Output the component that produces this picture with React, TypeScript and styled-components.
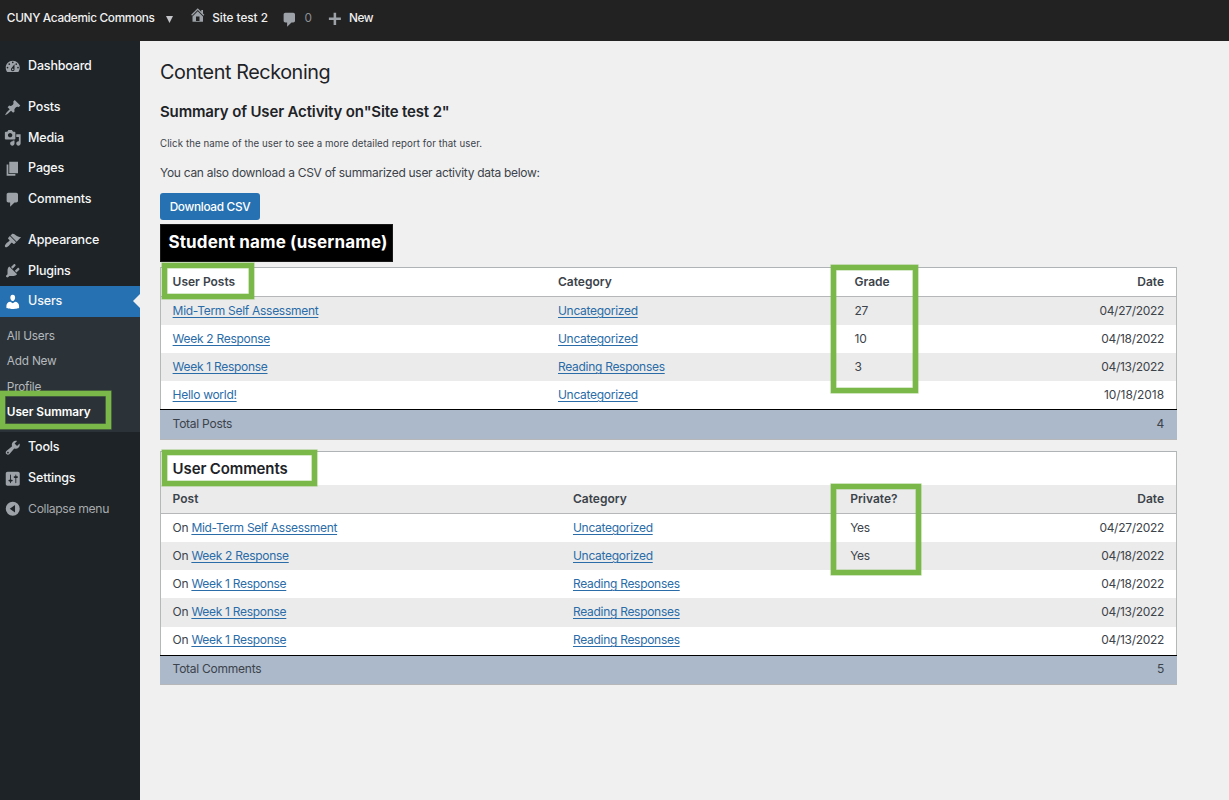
import React from "react";
import styled, { createGlobalStyle } from "styled-components";

const GlobalStyle = createGlobalStyle`
  *, *::before, *::after { box-sizing: border-box; }
  body {
    margin: 0;
    background: #f0f0f0;
    color: #3c434a;
    font-family: Inter, "Liberation Sans", sans-serif;
    font-size: 12px;
    letter-spacing: -0.29px;
  }
`;

const Page = styled.div`
  position: relative;
  height: 800px;
  overflow: hidden;
  display: flex;
  flex-direction: column;
`;

const Label = styled.span<{ $ls?: number }>`
  white-space: nowrap;
  letter-spacing: ${(p) => (p.$ls === undefined ? "inherit" : `${p.$ls}px`)};
`;

/* ---------- top bar ---------- */

const TopBar = styled.header`
  flex: none;
  height: 41px;
  background: #222222;
  color: #f0f0f1;
  display: flex;
  align-items: center;
  padding: 0 0 6px 6.8px;
  font-weight: 500;
  font-size: 11.8px;
  letter-spacing: 0;
`;

const SiteSwitch = styled.div`
  display: flex;
  align-items: center;
  width: 182.2px;
`;

const Caret = styled.svg`
  width: 7px;
  height: 7px;
  margin: 4px 0 0 11px;
  fill: #c3c4c7;
`;

const BarEntry = styled.div<{ $w: number; $muted?: boolean }>`
  display: flex;
  align-items: center;
  width: ${(p) => p.$w}px;
  color: ${(p) => (p.$muted ? "#8c8f94" : "#f0f0f1")};
  font-weight: ${(p) => (p.$muted ? 400 : 500)};
`;

const BarIcon = styled.svg<{ $gap: number; $dy?: number }>`
  flex: none;
  width: 17.5px;
  height: 17.5px;
  margin-right: ${(p) => p.$gap}px;
  margin-top: ${(p) => p.$dy ?? 0}px;
  fill: #9ca2a7;
`;

/* ---------- sidebar ---------- */

const Body = styled.div`
  flex: 1;
  display: flex;
`;

const Sidebar = styled.nav`
  flex: none;
  width: 140px;
  background: #1d2327;
  padding-top: 9.7px;
`;

const MenuItem = styled.div<{ $active?: boolean; $muted?: boolean; $gap?: boolean }>`
  position: relative;
  height: 30.7px;
  margin-top: ${(p) => (p.$gap ? 10.2 : 0)}px;
  padding: 0 0 0.8px 3.6px;
  display: flex;
  align-items: center;
  background: ${(p) => (p.$active ? "#2671b1" : "transparent")};
  color: ${(p) => (p.$muted ? "#a7aaad" : "#f6f7f7")};
  font-size: ${(p) => (p.$muted ? 12.2 : 12.5)}px;
  font-weight: ${(p) => (p.$muted ? 400 : 500)};
  letter-spacing: ${(p) => (p.$muted ? -0.36 : -0.18)}px;
`;

const MenuIcon = styled.svg<{ $white?: boolean }>`
  flex: none;
  width: 17.5px;
  height: 17.5px;
  margin-top: 1.8px;
  margin-right: 7px;
  fill: ${(p) => (p.$white ? "#ffffff" : "#9ca2a7")};
`;

const Notch = styled.i`
  position: absolute;
  right: 0;
  top: 8px;
  border: 7px solid transparent;
  border-left: 0;
  border-right-color: #f0f0f0;
`;

const SubMenu = styled.div`
  background: #2c3338;
  height: 115.3px;
  padding: 7.4px 0 0 6.8px;
`;

const SubItem = styled.div<{ $current?: boolean }>`
  height: 25.3px;
  line-height: 25.3px;
  font-size: 11.8px;
  letter-spacing: ${(p) => (p.$current ? -0.05 : -0.2)}px;
  color: ${(p) => (p.$current ? "#ffffff" : "#b4b9be")};
  font-weight: ${(p) => (p.$current ? 600 : 400)};
`;

/* ---------- content ---------- */

const Main = styled.main`
  flex: 1;
  display: flex;
  flex-direction: column;
  align-items: flex-start;
  padding: 18px 52px 0 20px;
`;

const Title = styled.h1`
  margin: 0;
  font-size: 19.8px;
  line-height: 26px;
  font-weight: 400;
  letter-spacing: -0.42px;
  color: #1d2327;
`;

const Heading = styled.h2`
  margin: 17px 0 0;
  font-size: 15px;
  line-height: 20px;
  font-weight: 600;
  letter-spacing: -0.15px;
  color: #1d2327;
`;

const Small = styled.p`
  margin: 14px 0 0;
  font-size: 9.7px;
  line-height: 16px;
  letter-spacing: 0.09px;
`;

const Para = styled.p`
  margin: 11px 0 0;
  line-height: 20px;
`;

const Button = styled.button`
  margin: 10px 0 0;
  width: 100px;
  height: 27px;
  padding: 0;
  border: 0;
  border-radius: 3px;
  background: #2671b1;
  color: #ffffff;
  font: 500 11.8px Inter, sans-serif;
  letter-spacing: -0.3px;
`;

const StudentName = styled.div`
  margin-top: 4px;
  width: 233px;
  height: 38px;
  line-height: 35px;
  padding-left: 7.4px;
  background: #000000;
  border: 1px solid #1a1a1a;
  color: #ffffff;
  font-size: 17px;
  font-weight: 700;
  letter-spacing: 0.15px;
`;

const Table = styled.section<{ $top: number }>`
  align-self: stretch;
  margin-top: ${(p) => p.$top}px;
  border: 1px solid #b5b7b9;
  border-top-color: #b0b3b5;
  background: #ffffff;
`;

const TableTitle = styled.h2`
  margin: 0;
  height: 33px;
  line-height: 33px;
  padding-left: 11.6px;
  font-size: 15px;
  font-weight: 600;
  letter-spacing: -0.12px;
  color: #1d2327;
`;

const Row = styled.div<{ $cols: string; $shade?: boolean; $h?: number; $lift?: number }>`
  display: grid;
  grid-template-columns: ${(p) => p.$cols};
  align-items: center;
  height: ${(p) => p.$h ?? 28}px;
  padding: 0 12px ${(p) => p.$lift ?? 1}px 11.6px;
  background: ${(p) => (p.$shade ? "#ebebeb" : "#ffffff")};
`;

const HeadRow = styled(Row)`
  border-bottom: 1px solid #b5b7b9;
  font-weight: 600;
  letter-spacing: 0;
`;

const FootRow = styled.div<{ $h: number }>`
  display: flex;
  justify-content: space-between;
  height: ${(p) => p.$h}px;
  margin: 0 -1px;
  padding: 0 13px 0 12.6px;
  line-height: ${(p) => p.$h * 2 - 32}px;
  letter-spacing: -0.25px;
  border-top: 1px solid #000000;
  background: #abb9cb;
`;

const Link = styled.a`
  color: #2a6ca8;
  text-decoration: underline;
  text-decoration-thickness: 1px;
  text-underline-offset: 2px;
`;

/* Marker rectangles drawn over the page */
const Marker = styled.div<{ $x: number; $y: number; $w: number; $h: number }>`
  position: absolute;
  left: ${(p) => p.$x}px;
  top: ${(p) => p.$y}px;
  width: ${(p) => p.$w}px;
  height: ${(p) => p.$h}px;
  border: 5px solid #7ab949;
  box-shadow: 0 0 0 0.6px #7ab94999, inset 0 0 0 0.6px #7ab94999;
`;

const ICONS = {
  dashboard:
    "M3.76 16h12.48c1.1-1.37 1.76-3.11 1.76-5 0-4.42-3.58-8-8-8s-8 3.58-8 8c0 1.89.66 3.63 1.76 5zM10 4c.55 0 1 .45 1 1s-.45 1-1 1-1-.45-1-1 .45-1 1-1zM6 6c.55 0 1 .45 1 1s-.45 1-1 1-1-.45-1-1 .45-1 1-1zm8 0c.55 0 1 .45 1 1s-.45 1-1 1-1-.45-1-1 .45-1 1-1zm-5.37 5.55L12 7v6c0 1.1-.9 2-2 2s-2-.9-2-2c0-.57.24-1.08.63-1.45zM4 10c.55 0 1 .45 1 1s-.45 1-1 1-1-.45-1-1 .45-1 1-1zm12 0c.55 0 1 .45 1 1s-.45 1-1 1-1-.45-1-1 .45-1 1-1zm-5 3c0-.55-.45-1-1-1s-1 .45-1 1 .45 1 1 1 1-.45 1-1z",
  posts:
    "M10.44 3.02l1.82-1.82 6.36 6.35-1.83 1.82c-1.05-.68-2.48-.57-3.41.36l-.75.75c-.92.93-1.04 2.35-.35 3.41l-1.83 1.82-2.41-2.41-2.8 2.79c-.42.42-3.38 2.71-3.8 2.29s1.86-3.39 2.28-3.81l2.79-2.79L4.1 9.36l1.83-1.82c1.05.69 2.48.57 3.4-.36l.75-.75c.93-.92 1.05-2.35.36-3.41z",
  media:
    "M13 11V4c0-.55-.45-1-1-1h-1.67L9 1H5L3.67 3H2c-.55 0-1 .45-1 1v7c0 .55.45 1 1 1h10c.55 0 1-.45 1-1zM7 4.5c1.38 0 2.5 1.12 2.5 2.5S8.38 9.5 7 9.5 4.5 8.38 4.5 7 5.62 4.5 7 4.5zM14 6h5v10.5c0 1.38-1.12 2.5-2.5 2.5S14 17.88 14 16.5s1.12-2.5 2.5-2.5c.17 0 .34.02.5.05V9h-3V6zm-4 8.05V13h2v3.5c0 1.38-1.12 2.5-2.5 2.5S7 17.88 7 16.5 8.12 14 9.5 14c.17 0 .34.02.5.05z",
  pages: "M6 15V2h10v13H6zm-1 1h8v2H3V5h2v11z",
  comments: "M5 2h9c1.1 0 2 .9 2 2v7c0 1.1-.9 2-2 2h-2l-5 5v-5H5c-1.1 0-2-.9-2-2V4c0-1.1.9-2 2-2z",
  appearance:
    "M14.48 11.06L7.41 3.99l1.5-1.5c.5-.56 2.3-.47 3.51.32 1.21.8 1.43 1.28 2.91 2.1 1.18.64 2.45 1.26 4.45.85zm-.71.71L6.7 4.7 4.93 6.47c-.39.39-.39 1.02 0 1.41l1.06 1.06c.39.39.39 1.03 0 1.42-.6.6-1.43 1.11-2.21 1.69-.35.26-.7.53-1.01.84C1.43 14.23.4 16.08 1.4 17.07c.99 1 2.84-.03 4.18-1.36.31-.31.58-.66.85-1.02.57-.78 1.08-1.61 1.69-2.21.39-.39 1.02-.39 1.41 0l1.06 1.06c.39.39 1.02.39 1.41 0z",
  plugins:
    "M13.11 4.36L9.87 7.6 8 5.73l3.24-3.24c.35-.34 1.05-.2 1.56.32.52.51.66 1.21.31 1.55zm-8 1.77l.91-1.12 9.01 9.01-1.19.84c-.71.71-2.63 1.16-3.82 1.16H6.14L4.9 17.26c-.59.59-1.54.59-2.12 0-.59-.58-.59-1.53 0-2.12l1.24-1.24v-3.88c0-1.13.4-3.19 1.09-3.89zm7.26 3.97l3.24-3.24c.34-.35 1.04-.21 1.55.31.52.51.66 1.21.31 1.55l-3.24 3.25z",
  users:
    "M10 9.25c-2.27 0-2.73-3.44-2.73-3.44C7 4.02 7.82 2 9.97 2c2.16 0 2.98 2.02 2.71 3.81 0 0-.41 3.44-2.68 3.44zm0 2.57L12.72 10c2.39 0 4.52 2.33 4.52 4.53v2.49s-3.65 1.13-7.24 1.13c-3.65 0-7.24-1.13-7.24-1.13v-2.49c0-2.25 1.94-4.48 4.47-4.48z",
  tools:
    "M16.68 9.77c-1.34 1.34-3.3 1.67-4.95.99l-5.41 6.52c-.99.99-2.59.99-3.58 0s-.99-2.59 0-3.57l6.52-5.42c-.68-1.65-.35-3.61.99-4.95 1.28-1.28 3.12-1.62 4.72-1.06l-2.89 2.89 2.82 2.82 2.86-2.87c.53 1.58.18 3.39-1.08 4.65zM3.81 16.21c.4.39 1.04.39 1.43 0 .4-.4.4-1.04 0-1.43-.39-.4-1.03-.4-1.43 0-.39.39-.39 1.03 0 1.43z",
  settings:
    "M18 16V4c0-1.1-.9-2-2-2H4c-1.1 0-2 .9-2 2v12c0 1.1.9 2 2 2h12c1.1 0 2-.9 2-2zM8 11h1c.55 0 1 .45 1 1s-.45 1-1 1H8v1.5c0 .28-.22.5-.5.5s-.5-.22-.5-.5V13H6c-.55 0-1-.45-1-1s.45-1 1-1h1V5.5c0-.28.22-.5.5-.5s.5.22.5.5V11zm5-2h-1c-.55 0-1-.45-1-1s.45-1 1-1h1V5.5c0-.28.22-.5.5-.5s.5.22.5.5V7h1c.55 0 1 .45 1 1s-.45 1-1 1h-1v5.5c0 .28-.22.5-.5.5s-.5-.22-.5-.5V9z",
  collapse: "M10 2a8 8 0 1 0 0 16 8 8 0 0 0 0-16zM12.6 5.8v8.4L6.6 10z",
  home: "M16 8.5l1.53 1.53-1.06 1.06L10 4.6l-6.47 6.49-1.06-1.06L10 2.5l4 4v-2h2v4zm-6-2.46l6 5.99V18H4v-5.97zM12 17v-5H8v5h4z",
  plus: "M17 8.7v2.8h-5.4V17H8.7v-5.5H3.3V8.7h5.4V3.2h2.9v5.5z",
};

type IconName = keyof typeof ICONS;

type Entry = { icon: IconName; text: string; gap?: boolean; muted?: boolean };

const UPPER: Entry[] = [
  { icon: "dashboard", text: "Dashboard" },
  { icon: "posts", text: "Posts", gap: true },
  { icon: "media", text: "Media" },
  { icon: "pages", text: "Pages" },
  { icon: "comments", text: "Comments" },
  { icon: "appearance", text: "Appearance", gap: true },
  { icon: "plugins", text: "Plugins" },
];

const LOWER: Entry[] = [
  { icon: "tools", text: "Tools" },
  { icon: "settings", text: "Settings" },
  { icon: "collapse", text: "Collapse menu", muted: true },
];

const SUB = ["All Users", "Add New", "Profile", "User Summary"];

const POSTS = [
  ["Mid-Term Self Assessment", "Uncategorized", "27", "04/27/2022"],
  ["Week 2 Response", "Uncategorized", "10", "04/18/2022"],
  ["Week 1 Response", "Reading Responses", "3", "04/13/2022"],
  ["Hello world!", "Uncategorized", "", "10/18/2018"],
];

const COMMENTS = [
  ["Mid-Term Self Assessment", "Uncategorized", "Yes", "04/27/2022"],
  ["Week 2 Response", "Uncategorized", "Yes", "04/18/2022"],
  ["Week 1 Response", "Reading Responses", "", "04/18/2022"],
  ["Week 1 Response", "Reading Responses", "", "04/13/2022"],
  ["Week 1 Response", "Reading Responses", "", "04/13/2022"],
];

const POST_COLS = "385.4px 296.6px 1fr auto";
const COMMENT_COLS = "400.4px 277.2px 1fr auto";

const renderEntry = (e: Entry) => (
  <MenuItem key={e.text} $gap={e.gap} $muted={e.muted}>
    <MenuIcon viewBox="0 0 20 20">
      <path fillRule="evenodd" d={ICONS[e.icon]} />
    </MenuIcon>
    <Label>{e.text}</Label>
  </MenuItem>
);

export default function App() {
  return (
    <Page>
      <GlobalStyle />
      <TopBar>
        <SiteSwitch>
          <Label $ls={-0.32}>CUNY Academic Commons</Label>
          <Caret viewBox="0 0 7 7">
            <path d="M0 0h7L3.5 7z" />
          </Caret>
        </SiteSwitch>
        <BarEntry $w={92}>
          <BarIcon viewBox="0 0 20 20" $gap={5.7} $dy={-6}>
            <path fillRule="evenodd" d={ICONS.home} />
          </BarIcon>
          <Label $ls={-0.04}>Site test 2</Label>
        </BarEntry>
        <BarEntry $w={45} $muted>
          <BarIcon viewBox="0 0 20 20" $gap={6} $dy={4}>
            <path d={ICONS.comments} />
          </BarIcon>
          <Label>0</Label>
        </BarEntry>
        <BarEntry $w={60}>
          <BarIcon viewBox="0 0 20 20" $gap={5.5} $dy={2}>
            <path d={ICONS.plus} />
          </BarIcon>
          <Label $ls={-0.4}>New</Label>
        </BarEntry>
      </TopBar>
      <Body>
        <Sidebar>
          {UPPER.map(renderEntry)}
          <MenuItem $active>
            <MenuIcon viewBox="0 0 20 20" $white>
              <path d={ICONS.users} />
            </MenuIcon>
            <Label>Users</Label>
            <Notch />
          </MenuItem>
          <SubMenu>
            {SUB.map((s) => (
              <SubItem key={s} $current={s === "User Summary"}>
                <Label>{s}</Label>
              </SubItem>
            ))}
          </SubMenu>
          {LOWER.map(renderEntry)}
        </Sidebar>
        <Main>
          <Title>
            <Label>Content Reckoning</Label>
          </Title>
          <Heading>
            <Label>Summary of User Activity on"Site test 2"</Label>
          </Heading>
          <Small>
            <Label>Click the name of the user to see a more detailed report for that user.</Label>
          </Small>
          <Para>
            <Label>You can also download a CSV of summarized user activity data below:</Label>
          </Para>
          <Button>
            <Label>Download CSV</Label>
          </Button>
          <StudentName>
            <Label>Student name (username)</Label>
          </StudentName>
          <Table $top={5}>
            <HeadRow $cols={POST_COLS} $h={29}>
              <Label>User Posts</Label>
              <Label>Category</Label>
              <Label>Grade</Label>
              <Label>Date</Label>
            </HeadRow>
            {POSTS.map(([title, cat, grade, date], i) => (
              <Row key={i} $cols={POST_COLS} $shade={i % 2 === 0}>
                <Label>
                  <Link>{title}</Link>
                </Label>
                <Label>
                  <Link>{cat}</Link>
                </Label>
                <Label>{grade}</Label>
                <Label $ls={date.startsWith("10") ? -0.06 : -0.3}>{date}</Label>
              </Row>
            ))}
            <FootRow $h={30}>
              <Label>Total Posts</Label>
              <Label>4</Label>
            </FootRow>
          </Table>
          <Table $top={11}>
            <TableTitle>
              <Label>User Comments</Label>
            </TableTitle>
            <HeadRow $cols={COMMENT_COLS} $h={29} $shade>
              <Label>Post</Label>
              <Label>Category</Label>
              <Label>Private?</Label>
              <Label>Date</Label>
            </HeadRow>
            {COMMENTS.map(([title, cat, priv, date], i) => (
              <Row
                key={i}
                $cols={COMMENT_COLS}
                $shade={i % 2 === 1}
                $h={i === 3 ? 29 : 28}
                $lift={i === 3 ? 2 : i === 4 ? 3 : 1}
              >
                <Label>
                  On <Link>{title}</Link>
                </Label>
                <Label>
                  <Link>{cat}</Link>
                </Label>
                <Label>{priv}</Label>
                <Label $ls={-0.3}>{date}</Label>
              </Row>
            ))}
            <FootRow $h={29}>
              <Label>Total Comments</Label>
              <Label>5</Label>
            </FootRow>
          </Table>
        </Main>
      </Body>
      <Marker $x={0} $y={391} $w={111} $h={38} />
      <Marker $x={162} $y={263} $w={92} $h={36} />
      <Marker $x={831} $y={265} $w={87} $h={128} />
      <Marker $x={162} $y={450} $w={155} $h={36} />
      <Marker $x={831} $y={484} $w={90} $h={91} />
    </Page>
  );
}
